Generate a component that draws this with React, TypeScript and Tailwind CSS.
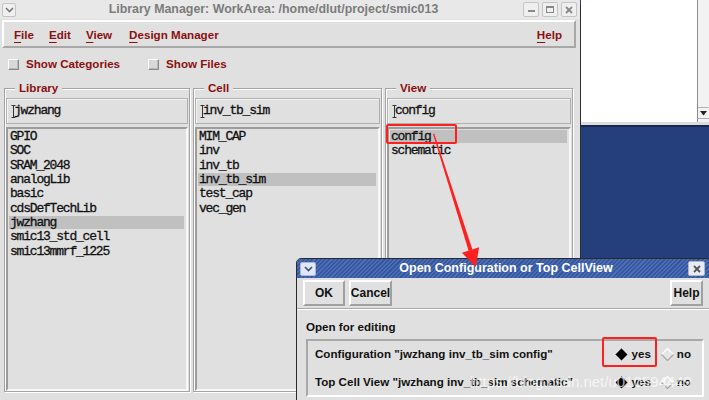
import React from "react";

const Ibeam = () => (
  <svg width="5" height="13" viewBox="0 0 5 13" className="shrink-0">
    <path d="M0.5 0.5h4M0.5 12.5h4M2.5 0.5v12" stroke="#333" strokeWidth="1" fill="none" />
  </svg>
);

const Chevron = ({ color = "#555" }: { color?: string }) => (
  <svg width="9" height="6" viewBox="0 0 9 6">
    <path d="M1 1l3.5 3.5L8 1" stroke={color} strokeWidth="1.6" fill="none" />
  </svg>
);

const XIcon = ({ color = "#666" }: { color?: string }) => (
  <svg width="8" height="8" viewBox="0 0 8 8">
    <path d="M1 1l6 6M7 1L1 7" stroke={color} strokeWidth="1.8" fill="none" />
  </svg>
);

const Check = () => (
  <div className="w-[11px] h-[11px] bg-[#d8d8d8] border border-t-white border-l-white border-b-[#8a8a8a] border-r-[#8a8a8a] shadow-[inset_-1px_-1px_0_#b8b8b8]" />
);

function ListBox({ items, sel, className }: { items: string[]; sel: number; className: string }) {
  return (
    <div className={className}>
      <div className="flex flex-col gap-[1.33px] pt-[1px] pl-[1px] pr-[2px]">
        {items.map((t, i) => (
          <div
            key={t}
            className={
              i === sel
                ? "h-[13px] leading-[13px] pl-[1px] bg-[#c0c0c0] whitespace-pre"
                : "h-[13px] leading-[13px] pl-[1px] whitespace-pre"
            }
          >
            {t}
          </div>
        ))}
      </div>
    </div>
  );
}

function Frame({
  label,
  value,
  items,
  sel,
  className,
}: {
  label: string;
  value: string;
  items: string[];
  sel: number;
  className: string;
}) {
  return (
    <div className={className}>
      <div className="absolute left-[10px] top-[-9px] px-[4px] bg-[#e0e0e0] text-[11.6px] leading-[16px] font-bold text-[#8a1010]">
        {label}
      </div>
      <div className="flex flex-col h-full px-[1px] pt-[9px]">
        <div className="h-[26px] border border-[#b0b0b0] shadow-[inset_1px_1px_0_#f4f4f4] flex items-center pl-[4px] font-['Liberation_Mono','Courier_New',monospace] text-[13px] tracking-[-1.2px] text-[#111] [-webkit-text-stroke:0.3px_#111]">
          <Ibeam />
          <span className="ml-[-2px]">{value}</span>
        </div>
        <ListBox
          items={items}
          sel={sel}
          className="mt-[3px] flex-1 border-2 border-t-[#9c9c9c] border-l-[#9c9c9c] border-b-[#f8f8f8] border-r-[#f8f8f8] font-['Liberation_Mono','Courier_New',monospace] text-[13px] tracking-[-1.2px] text-[#111] [-webkit-text-stroke:0.3px_#111]"
        />
      </div>
    </div>
  );
}

const Diamond = ({ on }: { on: boolean }) => (
  <svg width="13" height="13" viewBox="0 0 13 13" className="shrink-0">
    {on ? (
      <>
        <path d="M6.5 0.5L12.5 6.5L6.5 12.5L0.5 6.5Z" fill="#000" />
        <path d="M0.5 6.5L6.5 0.5" stroke="#555" strokeWidth="1" />
      </>
    ) : (
      <>
        <path d="M6.5 0.5L12.5 6.5L6.5 12.5L0.5 6.5Z" fill="#e6e6e6" />
        <path d="M0.5 6.5L6.5 0.5L12.5 6.5" stroke="#fff" strokeWidth="1.2" fill="none" />
        <path d="M0.5 6.5L6.5 12.5L12.5 6.5" stroke="#a8a8a8" strokeWidth="1.2" fill="none" />
      </>
    )}
  </svg>
);

function Btn({ children, className }: { children: React.ReactNode; className: string }) {
  return <div className={className}>{children}</div>;
}

export default function App() {
  return (
    <div className="relative w-[709px] h-[400px] overflow-hidden bg-[#243f7b] font-['Liberation_Sans',Arial,sans-serif]">
      {/* background app window (top right) */}
      <div className="absolute left-[581px] top-0 w-[128px] h-[127px] flex flex-col">
        <div className="flex-1 bg-white flex">
          <div className="flex-1" />
          <div className="w-[12px] border-l border-[#8c8c8c] bg-[#f2f2f2] flex flex-col justify-end pb-[3px]">
            <div className="h-[12px] border-t border-b border-[#b0b0b0] flex items-center justify-center">
              <svg width="7" height="5" viewBox="0 0 7 5">
                <path d="M0 0h7L3.5 4.5Z" fill="#222" />
              </svg>
            </div>
          </div>
        </div>
        <div className="h-[3px] bg-[#dcdcdc]" />
        <div className="h-[2px] bg-[#18294f]" />
      </div>

      {/* main window */}
      <div className="absolute left-0 top-0 w-[581px] h-[402px] bg-[#e0e0e0] border-r border-[#2e2e2e] rounded-tr-[5px] flex flex-col">
        {/* title bar */}
        <div className="h-[19px] bg-[#e8e8e8] flex items-center">
          <div className="ml-[2px] w-[14px] h-[14px] rounded-[2px] border border-[#c4c4c4] bg-[#f0f0f0] flex items-center justify-center">
            <Chevron color="#777" />
          </div>
          <div className="flex-1 flex justify-center pl-[8px] text-[12.4px] font-bold text-[#7c7c7c] whitespace-nowrap">
            Library Manager: WorkArea: /home/dlut/project/smic013
          </div>
          <div className="flex gap-[3px] mr-[3px]">
            <div className="w-[16px] h-[15px] rounded-[2px] border border-[#c4c4c4] bg-[#efefef] flex items-end justify-center pb-[4px]">
              <div className="w-[7px] h-[2px] bg-[#888]" />
            </div>
            <div className="w-[16px] h-[15px] rounded-[2px] border border-[#c4c4c4] bg-[#efefef] flex items-center justify-center">
              <div className="w-[8px] h-[7px] border border-t-2 border-[#888]" />
            </div>
            <div className="w-[16px] h-[15px] rounded-[2px] border border-[#c4c4c4] bg-[#efefef] flex items-center justify-center">
              <XIcon color="#888" />
            </div>
          </div>
        </div>

        {/* menu bar */}
        <div className="ml-[2px] mt-[1px] mr-[4px] h-[28px] pt-[1px] border-2 border-t-white border-l-white border-b-[#a8a8a8] border-r-[#a8a8a8] flex items-center text-[11.6px] font-bold text-[#8a1010]">
          <span className="ml-[10px]"><span className="underline underline-offset-[3px]">F</span>ile</span>
          <span className="ml-[15px]"><span className="underline underline-offset-[3px]">E</span>dit</span>
          <span className="ml-[15px]"><span className="underline underline-offset-[3px]">V</span>iew</span>
          <span className="ml-[17px]"><span className="underline underline-offset-[3px]">D</span>esign Manager</span>
          <span className="ml-auto mr-[12px]"><span className="underline underline-offset-[3px]">H</span>elp</span>
        </div>

        {/* check row */}
        <div className="h-[30px] pt-[2px] flex items-center text-[11.6px] font-bold text-[#8a1010]">
          <div className="ml-[8px]"><Check /></div>
          <span className="ml-[7px]">Show Categories</span>
          <div className="ml-[28px]"><Check /></div>
          <span className="ml-[7px]">Show Files</span>
        </div>

        {/* frames */}
        <div className="mt-[10px] flex gap-[3px] pl-[4px] h-[304px]">
          <Frame
            label="Library"
            value="jwzhang"
            sel={6}
            items={["GPIO", "SOC", "SRAM_2048", "analogLib", "basic", "cdsDefTechLib", "jwzhang", "smic13_std_cell", "smic13mmrf_1225"]}
            className="relative w-[186px] h-full border border-[#a4a4a4] shadow-[inset_1px_1px_0_#fff,1px_1px_0_#fff]"
          />
          <Frame
            label="Cell"
            value="inv_tb_sim"
            sel={3}
            items={["MIM_CAP", "inv", "inv_tb", "inv_tb_sim", "test_cap", "vec_gen"]}
            className="relative w-[189px] h-full border border-[#a4a4a4] shadow-[inset_1px_1px_0_#fff,1px_1px_0_#fff]"
          />
          <Frame
            label="View"
            value="config"
            sel={0}
            items={["config", "schematic"]}
            className="relative w-[188px] h-full border border-[#a4a4a4] shadow-[inset_1px_1px_0_#fff,1px_1px_0_#fff]"
          />
        </div>
      </div>

      {/* dialog */}
      <div className="absolute left-[296px] top-[258px] w-[414px] h-[150px] bg-[#e0e0e0] border border-[#2a2a2a] rounded-tl-[5px] flex flex-col overflow-hidden">
        <div className="h-[19px] flex items-center bg-[repeating-linear-gradient(135deg,#4a6db5_0px,#4a6db5_1.5px,#3657a0_1.5px,#3657a0_3px)]">
          <div className="ml-[3px] w-[16px] h-[14px] rounded-[2px] border border-[#a9b8d8] bg-[#dfe6f4] flex items-center justify-center">
            <Chevron color="#3a4f80" />
          </div>
          <div className="flex-1 text-center text-[12.5px] font-bold text-white pl-[8px] whitespace-nowrap">
            Open Configuration or Top CellView
          </div>
          <div className="mr-[4px] w-[17px] h-[15px] rounded-[2px] border border-[#b0b8c8] bg-[#e8ecf2] flex items-center justify-center">
            <XIcon color="#555" />
          </div>
        </div>

        {/* button bar */}
        <div className="h-[31px] flex items-center px-[6px] border-b border-[#a8a8a8] shadow-[0_1px_0_#fff]">
          <Btn className="w-[42px] h-[26px] border-2 border-t-white border-l-white border-b-[#a0a0a0] border-r-[#a0a0a0] flex items-center justify-center text-[12px] font-bold text-[#111]">OK</Btn>
          <Btn className="ml-[4px] w-[43px] h-[26px] border-2 border-t-white border-l-white border-b-[#a0a0a0] border-r-[#a0a0a0] flex items-center justify-center text-[12px] font-bold text-[#111]">Cancel</Btn>
          <Btn className="ml-auto w-[33px] h-[26px] border-2 border-t-white border-l-white border-b-[#a0a0a0] border-r-[#a0a0a0] flex items-center justify-center text-[12px] font-bold text-[#111]">Help</Btn>
        </div>

        <div className="mt-[11px] ml-[9px] text-[11.6px] font-bold text-[#111] leading-[14px]">Open for editing</div>

        <div className="mt-[5px] ml-[9px] mr-[5px] h-[58px] border-2 border-t-[#a8a8a8] border-l-[#a8a8a8] border-b-white border-r-white flex flex-col justify-center gap-[12px] text-[11.6px] font-bold text-[#111]">
          <div className="flex items-center h-[16px]">
            <span className="ml-[7px] flex-1 whitespace-nowrap">Configuration "jwzhang inv_tb_sim config"</span>
            <Diamond on />
            <span className="ml-[3px]">yes</span>
            <div className="ml-[10px]"><Diamond on={false} /></div>
            <span className="ml-[3px] mr-[11px]">no</span>
          </div>
          <div className="flex items-center h-[16px]">
            <span className="ml-[7px] flex-1 whitespace-nowrap">Top Cell View "jwzhang inv_tb_sim schematic"</span>
            <Diamond on />
            <span className="ml-[3px]">yes</span>
            <div className="ml-[10px]"><Diamond on={false} /></div>
            <span className="ml-[3px] mr-[11px]">no</span>
          </div>
        </div>
      </div>

      {/* watermark */}
      <div className="absolute left-[470px] top-[371px] text-[15px] text-white/70 whitespace-nowrap pointer-events-none">
        https://blog.csdn.net/u010594449
      </div>

      {/* red annotations */}
      <div className="absolute left-[386px] top-[124px] w-[71px] h-[20px] border-[2.5px] border-[#ff1f1f] rounded-[2px] pointer-events-none" />
      <div className="absolute left-[602px] top-[337px] w-[55px] h-[30px] border-[2.5px] border-[#ff1f1f] rounded-[2px] pointer-events-none" />
      <svg className="absolute left-0 top-0 pointer-events-none" width="709" height="400" viewBox="0 0 709 400">
        <polygon points="433,134 434.2,133.6 472.4,249.6 468.6,250.8" fill="#ff1f1f" />
        <polygon points="479.1,247.2 461.9,252.8 475.8,267" fill="#ff1f1f" />
      </svg>
    </div>
  );
}
